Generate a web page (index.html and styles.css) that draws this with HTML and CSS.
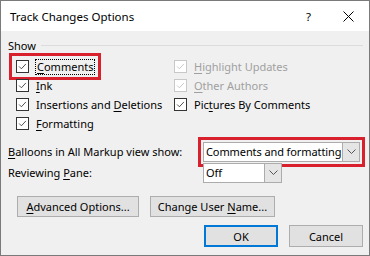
FILE: index.html
```html
<!DOCTYPE html>
<html lang="en">
<head>
    <meta charset="UTF-8">
    <title>Track Changes Options</title>
    <link rel="stylesheet" href="styles.css">
</head>
<body>
    <div class="window">
        <div class="titlebar">
            <span class="title">Track Changes Options</span>
            <span class="help">?</span>
            <svg class="close" width="11" height="11" viewBox="0 0 11 11"><path d="M0.5 0.5 L10.5 10.5 M10.5 0.5 L0.5 10.5" stroke="#000" stroke-width="1" fill="none"/></svg>
        </div>
        <div class="content">
            <div class="legend"><span>Show</span><span class="rule"></span></div>

            <div class="checks">
                <label class="check marked"><span class="box"><svg viewBox="0 0 13 13"><path d="M2.5 6.5 L5.2 9.2 L10.5 3.5" /></svg></span><span class="focus"><u>C</u>omments</span></label>
                <label class="check disabled"><span class="box"><svg viewBox="0 0 13 13"><path d="M2.5 6.5 L5.2 9.2 L10.5 3.5" /></svg></span><span><u>H</u>ighlight Updates</span></label>

                <label class="check"><span class="box"><svg viewBox="0 0 13 13"><path d="M2.5 6.5 L5.2 9.2 L10.5 3.5" /></svg></span><span><u>I</u>nk</span></label>
                <label class="check disabled"><span class="box"><svg viewBox="0 0 13 13"><path d="M2.5 6.5 L5.2 9.2 L10.5 3.5" /></svg></span><span><u>O</u>ther Authors</span></label>

                <label class="check"><span class="box"><svg viewBox="0 0 13 13"><path d="M2.5 6.5 L5.2 9.2 L10.5 3.5" /></svg></span><span>Insertions and <u>D</u>eletions</span></label>
                <label class="check"><span class="box"><svg viewBox="0 0 13 13"><path d="M2.5 6.5 L5.2 9.2 L10.5 3.5" /></svg></span><span>Pic<u>t</u>ures By Comments</span></label>

                <label class="check"><span class="box"><svg viewBox="0 0 13 13"><path d="M2.5 6.5 L5.2 9.2 L10.5 3.5" /></svg></span><span><u>F</u>ormatting</span></label>
            </div>

            <div class="fields">
                <div class="field">
                    <span class="field-label"><u>B</u>alloons in All Markup view show:</span>
                    <div class="combo wide marked">
                        <span class="combo-text">Comments and formatting</span>
                        <span class="arrow"><svg width="9" height="5" viewBox="0 0 9 5"><path d="M0.5 0.5 L4.5 4.5 L8.5 0.5" /></svg></span>
                    </div>
                </div>
                <div class="field">
                    <span class="field-label">Reviewing <u>P</u>ane:</span>
                    <div class="combo narrow">
                        <span class="combo-text">Off</span>
                        <span class="arrow"><svg width="9" height="5" viewBox="0 0 9 5"><path d="M0.5 0.5 L4.5 4.5 L8.5 0.5" /></svg></span>
                    </div>
                </div>
            </div>

            <div class="buttons">
                <button class="btn advanced"><u>A</u>dvanced Options...</button>
                <button class="btn username">Change User <u>N</u>ame...</button>
            </div>

            <div class="actions">
                <button class="btn default">OK</button>
                <button class="btn">Cancel</button>
            </div>
        </div>
    </div>
</body>
</html>
```

FILE: styles.css
```css
body {
    margin: 0;
    font-family: "Noto Sans", "Liberation Sans", sans-serif;
    font-size: 11px;
    color: #000;
    background-color: #fff;
}

u {
    text-decoration: underline;
    text-underline-offset: 2px;
}

.window {
    width: 370px;
    height: 256px;
    box-sizing: border-box;
    border: 1px solid #7a7a7a;
    display: flex;
    flex-direction: column;
}

.titlebar {
    height: 30px;
    background-color: #fff;
    display: flex;
    align-items: center;
    padding-left: 9px;
    flex-shrink: 0;
    font-size: 11.5px;
}

.title {
    flex: 1;
}

.help {
    margin-right: 32px;
}

.close {
    margin-right: 15px;
}

.content {
    flex: 1;
    background-color: #f0f0f0;
    padding: 6px 6px 0 7px;
}

.legend {
    display: flex;
    align-items: center;
    height: 16px;
}

.rule {
    flex: 1;
    height: 1px;
    background-color: #dcdcdc;
    margin-left: 5px;
}

.checks {
    display: grid;
    grid-template-columns: 158px auto;
    grid-auto-rows: 19px;
    padding-left: 8px;
    margin-top: 4px;
}

.check {
    display: flex;
    align-items: center;
    gap: 7px;
}

.box {
    width: 11px;
    height: 11px;
    border: 1px solid #333;
    background-color: #fff;
    display: flex;
}

.box svg {
    width: 11px;
    height: 11px;
}

.box path {
    fill: none;
    stroke: #333;
    stroke-width: 1;
}

.check.disabled {
    color: #a0a0a0;
}

.check.disabled .box {
    border-color: #c8c8c8;
}

.check.disabled .box path {
    stroke: #c0c0c0;
}

.focus {
    outline: 1px dotted #000;
    padding: 0 1px;
    line-height: 14px;
}

.check.marked {
    justify-self: start;
    align-self: center;
    height: 13px;
    outline: 3px solid #d9202d;
    outline-offset: 4px;
}

.fields {
    margin-top: 8px;
}

.field {
    display: flex;
    align-items: center;
    height: 21px;
}

.field-label {
    width: 195px;
    flex-shrink: 0;
}

.combo {
    height: 20px;
    box-sizing: border-box;
    border: 1px solid #acacac;
    background-color: #fff;
    display: flex;
    align-items: stretch;
}

.combo.wide {
    width: 157px;
}

.combo.narrow {
    width: 79px;
}

.combo.marked {
    outline: 3px solid #d9202d;
    outline-offset: 2px;
}

.combo-text {
    flex: 1;
    padding-left: 2px;
    display: flex;
    align-items: center;
    white-space: nowrap;
    letter-spacing: -0.1px;
    font-size: 11px;
}

.arrow {
    width: 16px;
    background-color: #e5e5e5;
    border-left: 1px solid #acacac;
    display: flex;
    align-items: center;
    justify-content: center;
}

.arrow path {
    fill: none;
    stroke: #555;
    stroke-width: 1;
}

.btn {
    font-family: inherit;
    font-size: 11px;
    color: #000;
    background-color: #e1e1e1;
    border: 1px solid #adadad;
    height: 21px;
    padding: 0;
}

.buttons {
    display: flex;
    gap: 11px;
    margin-top: 13px;
    padding-left: 9px;
}

.advanced {
    width: 122px;
}

.username {
    width: 125px;
}

.actions {
    display: flex;
    justify-content: flex-end;
    gap: 11px;
    margin-top: 8px;
}

.actions .btn {
    width: 74px;
    height: 22px;
}

.btn.default {
    border: 2px solid #0078d7;
}
```
